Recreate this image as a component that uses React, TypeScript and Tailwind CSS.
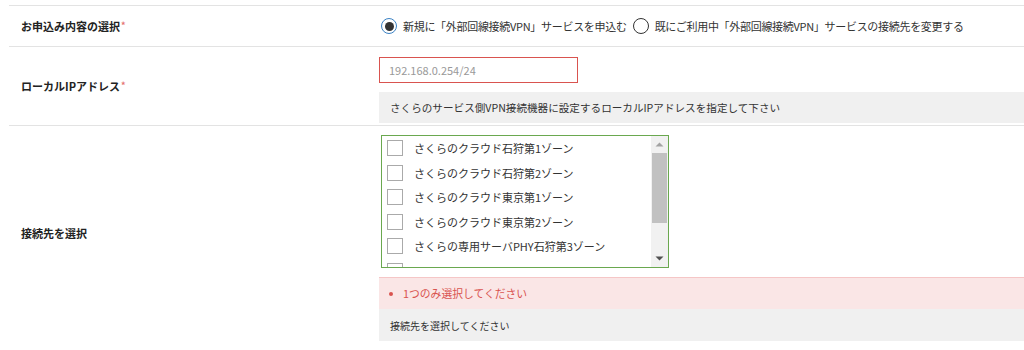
import React from "react";

const font = { fontFamily: '"Noto Sans CJK JP", "Noto Sans", sans-serif' };

const zones = [
  "さくらのクラウド石狩第1ゾーン",
  "さくらのクラウド石狩第2ゾーン",
  "さくらのクラウド東京第1ゾーン",
  "さくらのクラウド東京第2ゾーン",
  "さくらの専用サーバPHY石狩第3ゾーン",
];

function Label({ text, req }: { text: string; req?: boolean }) {
  return (
    <div className="pl-[12px] flex items-center text-[11px] font-bold text-[#222]">
      {text}
      {req && <span className="text-[#e57373] ml-[1px] text-[9px]">*</span>}
    </div>
  );
}

function Radio({ checked }: { checked?: boolean }) {
  return (
    <span
      className={`inline-flex items-center justify-center w-[16px] h-[16px] rounded-full border ${
        checked ? "border-[#3b82c4] bg-white" : "border-[#333]"
      }`}
    >
      {checked && <span className="w-[9px] h-[9px] rounded-full bg-[#333]" />}
    </span>
  );
}

export default function App() {
  return (
    <div className="w-[1024px] h-[350px] bg-white overflow-hidden text-[11px] text-[#333]" style={font}>
      <div className="pl-[9px] pt-[5px]">
        {/* Row 1 */}
        <div className="border-t border-[#e3e3e3] h-[41px] grid grid-cols-[370px_1fr]">
          <Label text="お申込み内容の選択" req />
          <div className="flex items-center gap-[6px] pl-[2px] tracking-[-0.3px]">
            <Radio checked />
            <span>新規に「外部回線接続VPN」サービスを申込む</span>
            <Radio />
            <span>既にご利用中「外部回線接続VPN」サービスの接続先を変更する</span>
          </div>
        </div>
        {/* Row 2 */}
        <div className="border-t border-[#e3e3e3] h-[79px] grid grid-cols-[370px_1fr]">
          <Label text="ローカルIPアドレス" req />
          <div className="pt-[10px] flex flex-col">
            <div className="w-[199px] h-[26px] border border-[#d9534f] flex items-center pl-[9px] text-[#999] text-[11px]">
              192.168.0.254/24
            </div>
            <div className="mt-[9px] h-[31px] bg-[#f0f0f0] flex items-center pl-[11px] text-[10.6px] text-[#333]">
              さくらのサービス側VPN接続機器に設定するローカルIPアドレスを指定して下さい
            </div>
          </div>
        </div>
        {/* Row 3 */}
        <div className="border-t border-[#e3e3e3] grid grid-cols-[370px_1fr]">
          <Label text="接続先を選択" />
          <div className="pt-[9px] flex flex-col">
            <div className="ml-[2px] w-[288px] h-[133px] border border-[#6aa84f] flex overflow-hidden">
              <div className="flex-1 overflow-hidden">
                {zones.map((z) => (
                  <div key={z} className="h-[24.5px] flex items-center pl-[5px] gap-[11px]">
                    <span className="w-[16px] h-[16px] border border-[#aaa] bg-white shrink-0" />
                    <span className="text-[#333]">{z}</span>
                  </div>
                ))}
                <div className="h-[24.5px] flex items-center pl-[5px]">
                  <span className="w-[16px] h-[16px] border border-[#aaa] bg-white shrink-0" />
                </div>
              </div>
              <div className="w-[17px] bg-[#f1f1f1] flex flex-col items-center">
                <svg width="17" height="17" viewBox="0 0 17 17">
                  <path d="M4.5 10.5 L8.5 6.5 L12.5 10.5 Z" fill="#a3a3a3" />
                </svg>
                <div className="w-[15px] h-[70px] bg-[#c1c1c1]" />
                <div className="flex-1" />
                <svg width="17" height="17" viewBox="0 0 17 17">
                  <path d="M4.5 6.5 L8.5 10.5 L12.5 6.5 Z" fill="#505050" />
                </svg>
              </div>
            </div>
            <div className="mt-[9px] h-[32px] bg-[#fae6e6] border-t border-[#f5c6c6] flex items-center pl-[10px] text-[10.8px] text-[#d9534f]">
              <span className="w-[4px] h-[4px] bg-[#d9534f] rounded-full mr-[10px]" />
              1つのみ選択してください
            </div>
            <div className="h-[32px] bg-[#f0f0f0] flex items-center pl-[11px] text-[10px] text-[#333]">
              接続先を選択してください
            </div>
          </div>
        </div>
      </div>
    </div>
  );
}
